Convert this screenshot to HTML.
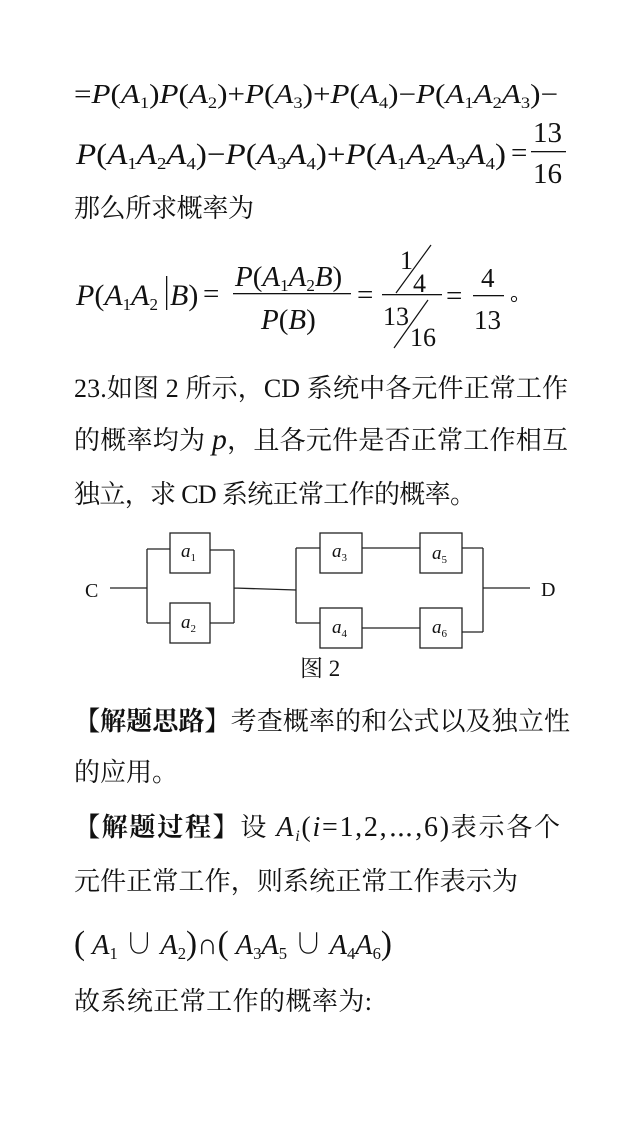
<!DOCTYPE html>
<html><head><meta charset="utf-8"><style>
html,body{margin:0;padding:0;background:#fff;}
svg{display:block;}
.s{font-family:"Liberation Serif","Noto Serif CJK SC",serif;fill:#111;}
.c{font-family:"Liberation Serif","Noto Serif CJK SC",serif;fill:#111;}
.i{font-style:italic;}
.b{font-weight:bold;}
</style></head><body>
<svg width="637" height="1134" viewBox="0 0 637 1134" xmlns="http://www.w3.org/2000/svg">
<text class="s" x="74" y="103" font-size="27" textLength="484" lengthAdjust="spacingAndGlyphs">=<tspan class="i">P</tspan>(<tspan class="i">A</tspan><tspan font-size="16" dy="5">1</tspan><tspan dy="-5">)</tspan><tspan class="i">P</tspan>(<tspan class="i">A</tspan><tspan font-size="16" dy="5">2</tspan><tspan dy="-5">)+</tspan><tspan class="i">P</tspan>(<tspan class="i">A</tspan><tspan font-size="16" dy="5">3</tspan><tspan dy="-5">)+</tspan><tspan class="i">P</tspan>(<tspan class="i">A</tspan><tspan font-size="16" dy="5">4</tspan><tspan dy="-5">)−</tspan><tspan class="i">P</tspan>(<tspan class="i">A</tspan><tspan font-size="16" dy="5">1</tspan><tspan class="i" dy="-5">A</tspan><tspan font-size="16" dy="5">2</tspan><tspan class="i" dy="-5">A</tspan><tspan font-size="16" dy="5">3</tspan><tspan dy="-5">)−</tspan></text>
<text class="s" x="76" y="164" font-size="30" textLength="430" lengthAdjust="spacingAndGlyphs"><tspan class="i">P</tspan>(<tspan class="i">A</tspan><tspan font-size="17" dy="5">1</tspan><tspan class="i" dy="-5">A</tspan><tspan font-size="17" dy="5">2</tspan><tspan class="i" dy="-5">A</tspan><tspan font-size="17" dy="5">4</tspan><tspan dy="-5">)−</tspan><tspan class="i">P</tspan>(<tspan class="i">A</tspan><tspan font-size="17" dy="5">3</tspan><tspan class="i" dy="-5">A</tspan><tspan font-size="17" dy="5">4</tspan><tspan dy="-5">)+</tspan><tspan class="i">P</tspan>(<tspan class="i">A</tspan><tspan font-size="17" dy="5">1</tspan><tspan class="i" dy="-5">A</tspan><tspan font-size="17" dy="5">2</tspan><tspan class="i" dy="-5">A</tspan><tspan font-size="17" dy="5">3</tspan><tspan class="i" dy="-5">A</tspan><tspan font-size="17" dy="5">4</tspan><tspan dy="-5">)</tspan></text>
<text class="s" x="511" y="162" font-size="29">=</text>
<text class="s" x="533" y="142" font-size="29">13</text>
<rect x="531" y="151" width="35" height="1.3" fill="#111"/>
<text class="s" x="533" y="183" font-size="29">16</text>
<text class="c" x="74" y="217" font-size="26" textLength="180">那么所求概率为</text>
<text class="s" x="76" y="305" font-size="30"><tspan class="i">P</tspan>(<tspan class="i">A</tspan><tspan font-size="17" dy="5">1</tspan><tspan class="i" dy="-5">A</tspan><tspan font-size="17" dy="5">2</tspan></text>
<rect x="166" y="276" width="1.3" height="34" fill="#111"/>
<text class="s" x="170" y="305" font-size="30"><tspan class="i">B</tspan>)</text>
<text class="s" x="203" y="303" font-size="29">=</text>
<text class="s" x="235" y="286" font-size="29"><tspan class="i">P</tspan>(<tspan class="i">A</tspan><tspan font-size="17" dy="5">1</tspan><tspan class="i" dy="-5">A</tspan><tspan font-size="17" dy="5">2</tspan><tspan class="i" dy="-5">B</tspan>)</text>
<rect x="233" y="293" width="118" height="1.3" fill="#111"/>
<text class="s" x="261" y="329" font-size="29"><tspan class="i">P</tspan>(<tspan class="i">B</tspan>)</text>
<text class="s" x="357" y="304" font-size="29">=</text>
<text class="s" x="400" y="269" font-size="26">1</text>
<line x1="431" y1="245" x2="396" y2="293" stroke="#111" stroke-width="1.2"/>
<text class="s" x="413" y="292" font-size="26">4</text>
<rect x="382" y="294" width="60" height="1.3" fill="#111"/>
<text class="s" x="383" y="325" font-size="26">13</text>
<line x1="428" y1="300" x2="394" y2="348" stroke="#111" stroke-width="1.2"/>
<text class="s" x="410" y="346" font-size="26">16</text>
<text class="s" x="446" y="305" font-size="29">=</text>
<text class="s" x="481" y="287" font-size="27">4</text>
<rect x="473" y="295" width="31" height="1.3" fill="#111"/>
<text class="s" x="474" y="329" font-size="27">13</text>
<circle cx="514" cy="299" r="2.6" fill="none" stroke="#111" stroke-width="1"/>
<text class="c" x="74" y="397" font-size="26" textLength="494">23.如图 2 所示，CD 系统中各元件正常工作</text>
<text class="c" x="74" y="449" font-size="26" textLength="494">的概率均为 <tspan class="s i" font-size="30">p</tspan>，且各元件是否正常工作相互</text>
<text class="c" x="74" y="503" font-size="26" textLength="402">独立，求 CD 系统正常工作的概率。</text>
<g stroke="#222" stroke-width="1.3" fill="none">
<rect x="170" y="533" width="40" height="40"/>
<rect x="170" y="603" width="40" height="40"/>
<rect x="320" y="533" width="42" height="40"/>
<rect x="420" y="533" width="42" height="40"/>
<rect x="320" y="608" width="42" height="40"/>
<rect x="420" y="608" width="42" height="40"/>
<path d="M110 588H147M147 549V623M147 549H170M147 623H170M210 550H234M210 623H234M234 550V623M234 588L296 590M296 548V623M296 548H320M296 623H320M362 548H420M362 628H420M462 548H483M462 632H483M483 548V632M483 588H530"/>
</g>
<text class="s" x="85" y="597" font-size="20">C</text>
<text class="s" x="541" y="596" font-size="20">D</text>
<text class="s i" x="181" y="557" font-size="19">a<tspan font-style="normal" font-size="11" dy="4">1</tspan></text>
<text class="s i" x="181" y="628" font-size="19">a<tspan font-style="normal" font-size="11" dy="4">2</tspan></text>
<text class="s i" x="332" y="557" font-size="19">a<tspan font-style="normal" font-size="11" dy="4">3</tspan></text>
<text class="s i" x="432" y="559" font-size="19">a<tspan font-style="normal" font-size="11" dy="4">5</tspan></text>
<text class="s i" x="332" y="633" font-size="19">a<tspan font-style="normal" font-size="11" dy="4">4</tspan></text>
<text class="s i" x="432" y="633" font-size="19">a<tspan font-style="normal" font-size="11" dy="4">6</tspan></text>
<text class="c" x="300" y="676" font-size="23">图 2</text>
<text class="c" x="74" y="730" font-size="26" textLength="496"><tspan class="b">【解题思路】</tspan>考查概率的和公式以及独立性</text>
<text class="c" x="74" y="781" font-size="26">的应用。</text>
<text class="c" x="74" y="836" font-size="26" textLength="486"><tspan class="b">【解题过程】</tspan>设 <tspan class="s i" font-size="28">A</tspan><tspan class="s i" font-size="16" dy="5">i</tspan><tspan class="s" font-size="28" dy="-5">(</tspan><tspan class="s i" font-size="28">i</tspan><tspan class="s" font-size="28">=1,2,⋯,6)</tspan>表示各个</text>
<text class="c" x="74" y="890" font-size="26" textLength="444">元件正常工作，则系统正常工作表示为</text>
<text class="s" x="74" y="954" font-size="29" textLength="318" lengthAdjust="spacingAndGlyphs"><tspan font-size="34">(</tspan> <tspan class="i">A</tspan><tspan font-size="17" dy="5">1</tspan><tspan dy="-5"> ∪ </tspan><tspan class="i">A</tspan><tspan font-size="17" dy="5">2</tspan><tspan dy="-5" font-size="34">)</tspan>∩<tspan font-size="34">(</tspan> <tspan class="i">A</tspan><tspan font-size="17" dy="5">3</tspan><tspan class="i" dy="-5">A</tspan><tspan font-size="17" dy="5">5</tspan><tspan dy="-5"> ∪ </tspan><tspan class="i">A</tspan><tspan font-size="17" dy="5">4</tspan><tspan class="i" dy="-5">A</tspan><tspan font-size="17" dy="5">6</tspan><tspan dy="-5" font-size="34">)</tspan></text>
<text class="c" x="74" y="1010" font-size="26" textLength="298">故系统正常工作的概率为:</text>
</svg>
</body></html>
